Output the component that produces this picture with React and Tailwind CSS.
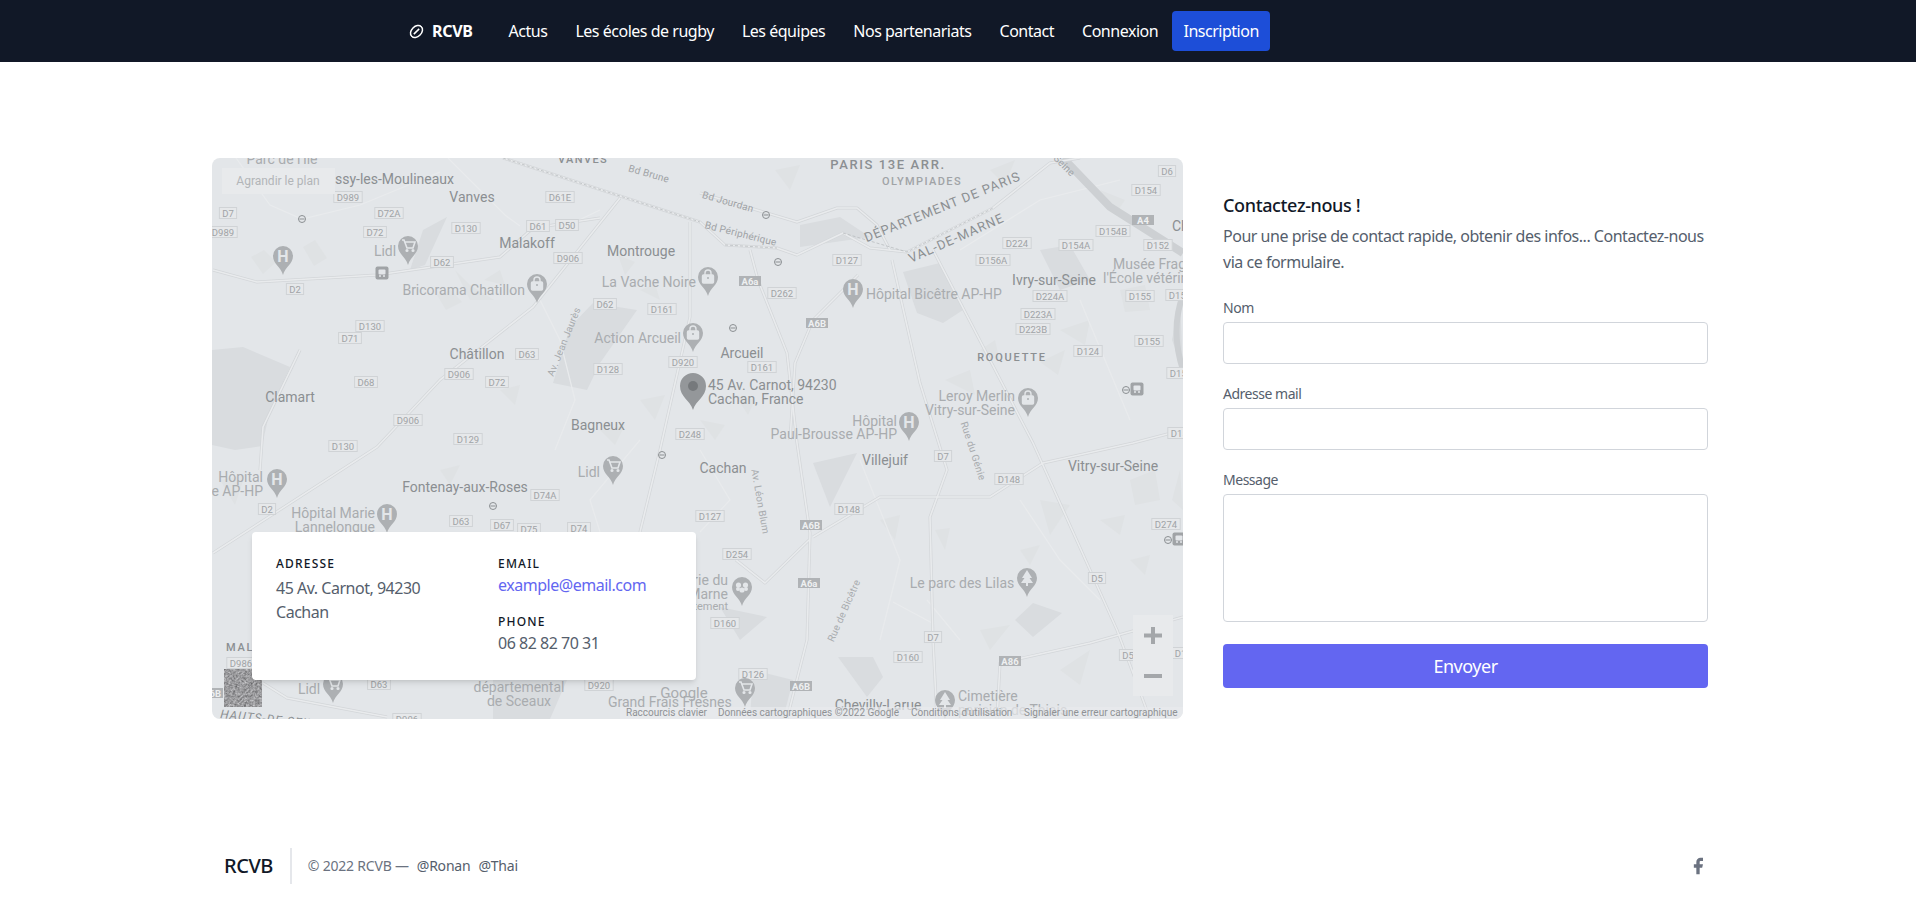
const badges = [
  [348,197,'D989'],[389,213,'D72A'],[228,213,'D7'],[223,232,'D989'],[375,232,'D72'],[466,228,'D130'],[560,197,'D61E'],[538,226,'D61'],[567,225,'D50'],[568,258,'D906'],[442,262,'D62'],[295,289,'D2'],[605,304,'D62'],[662,309,'D161'],[370,326,'D130'],[350,338,'D71'],[527,354,'D63'],[608,369,'D128'],[683,362,'D920'],[366,382,'D68'],[459,374,'D906'],[497,382,'D72'],[408,420,'D906'],[468,439,'D129'],[343,446,'D130'],[690,434,'D248'],
  [1167,171,'D6'],[1146,190,'D154'],[1113,231,'D154B'],[1017,243,'D224'],[1076,245,'D154A'],[1158,245,'D152'],[847,260,'D127'],[993,260,'D156A'],[782,293,'D262'],[1050,296,'D224A'],[1140,296,'D155'],[1180,295,'D155'],[1038,314,'D223A'],[1033,329,'D223B'],[1149,341,'D155'],[1088,351,'D124'],[762,367,'D161'],[1181,373,'D155'],[1182,433,'D155'],
  [267,509,'D2'],[545,495,'D74A'],[461,521,'D63'],[502,525,'D67'],[529,529,'D75'],[579,528,'D74'],[241,663,'D986'],[379,684,'D63'],[599,685,'D920'],[407,719,'D906'],
  [943,456,'D7'],[1009,479,'D148'],[849,509,'D148'],[710,516,'D127'],[737,554,'D254'],[1166,524,'D274'],[1097,578,'D5'],[725,623,'D160'],[933,637,'D7'],[908,657,'D160'],[753,674,'D126'],[1128,655,'D5'],[1186,653,'D152'],
]

const motorways = [[1143,220,'A4'],[750,281,'A6a'],[817,323,'A6B'],[811,525,'A6B'],[809,583,'A6a'],[1010,661,'A86'],[801,686,'A6B'],[212,693,'A6B']]

// x, y, text, anchor, color, size
const town = '#8b8f92'
const poi = '#a9acaf'
const labels = [
  [335,184,'ssy-les-Moulineaux','start',town],[472,202,'Vanves','middle',town],[282,164,"Parc de l'Île",'middle',poi],
  [527,248,'Malakoff','middle',town],[641,256,'Montrouge','middle',town],[385,256,'Lidl','middle',poi],[525,295,'Bricorama Chatillon','end',poi],
  [696,287,'La Vache Noire','end',poi],[681,343,'Action Arcueil','end',poi],[477,359,'Châtillon','middle',town],[290,402,'Clamart','middle',town],[598,430,'Bagneux','middle',town],
  [1113,269,'Musée Fragonard','start',poi],[1103,283,"l'École vétérinaire",'start',poi],[1054,285,'Ivry-sur-Seine','middle',town],[866,299,'Hôpital Bicêtre AP-HP','start',poi],
  [742,358,'Arcueil','middle',town],[708,390,'45 Av. Carnot, 94230','start',town],[708,404,'Cachan, France','start',town],
  [1015,401,'Leroy Merlin','end',poi],[1015,415,'Vitry-sur-Seine','end',poi],[897,426,'Hôpital','end',poi],[897,439,'Paul-Brousse AP-HP','end',poi],[1172,231,'Cha','start',town],
  [263,482,'Hôpital','end',poi],[263,496,'e AP-HP','end',poi],[375,518,'Hôpital Marie','end',poi],[375,532,'Lannelongue','end',poi],[465,492,'Fontenay-aux-Roses','middle',town],[600,477,'Lidl','end',poi],
  [309,694,'Lidl','middle',poi],[519,692,'départemental','middle',poi],[519,706,'de Sceaux','middle',poi],[608,707,'Grand Frais Fresnes','start',poi],
  [723,473,'Cachan','middle',town],[885,465,'Villejuif','middle',town],[1113,471,'Vitry-sur-Seine','middle',town],[728,585,'Prairie du','end',poi],[728,599,'Marne','end',poi],[728,610,'Département','end',poi,11],
  [962,588,'Le parc des Lilas','middle',poi],[878,710,'Chevilly-Larue','middle',town],[958,701,'Cimetière','start',poi],[958,715,'parisien de Thiais','start',poi],
]

// x, y, text, angle, size, color
const streets = [
  [648,177,'Bd Brune',16,10,'#a0a3a6'],[727,205,'Bd Jourdan',16,10,'#a0a3a6'],[740,237,'Bd Périphérique',14,10,'#a0a3a6'],[1062,168,'Seine',45,10,'#a0a3a6'],
  [567,343,'Av. Jean Jaurès',-68,10,'#a9acaf'],[757,502,'Av. Léon Blum',80,10,'#a9acaf'],[970,452,'Rue du Génie',72,10,'#a9acaf'],[847,612,'Rue de Bicêtre',-66,10,'#a9acaf'],
  [944,211,'DÉPARTEMENT DE PARIS',-22,13,town],[958,242,'VAL-DE-MARNE',-24,13,town],
]

const roads = [
  'M503 158L700 222L725 245L777 248L797 255L843 233L870 248L907 252L993 208L1050 163L1080 158',
  'M700 193L797 222L837 208L857 208L877 225L890 250',
  'M750 250L758 280L787 353L797 443L810 533L807 640L787 719',
  'M858 275L813 320L795 363L790 440',
  'M620 198L533 307L440 380L377 447L213 553',
  'M933 250L1033 443L1117 630L1133 673L1150 719',
  'M892 260L920 383L947 470L930 517L933 640L937 719',
  'M813 537L880 497L990 497L1043 463L1133 443L1183 430',
  'M997 719L1000 663L1090 643L1183 617',
  'M213 270L257 282L377 275L500 257L533 228L600 218',
  'M300 350L263 427L260 470',
  'M690 222L690 317L660 450L640 532',
  'M263 683L287 698L387 717',
  'M736 560L765 583L809 540',
]

// faint single lines, streets too small to have a casing
const minor = [
  'M236 158L270 205L302 219L360 205L440 172',
  'M448 158L505 215L520 226M575 222L600 210',
  'M540 300L560 340L575 400L555 450',
  'M640 440L590 500L600 532',
  'M700 450L730 500L700 532',
  'M860 460L900 560L880 640',
  'M1020 500L1060 560L1100 600',
  'M960 250L1040 200L1120 180',
  'M1080 300L1130 420',
  'M927 600L960 640M893 602L934 624',
]

const areas = [
  '212,350 243,347 290,367 270,410 262,446 235,450 212,445',
  '593,303 637,310 600,363 587,390 553,383 570,327',
  '903,272 940,263 963,310 943,323 917,313',
  '800,225 840,217 870,237 800,247',
  '1015,620 1033,603 1062,613 1033,637',
  '838,657 873,657 883,677 867,697',
  '813,463 857,453 830,507',
  '493,680 567,680 550,719 493,719',
  '720,607 767,617 740,640',
  '753,670 793,680 783,719 750,719',
  '423,230 447,217 425,265 410,270',
  '1040,250 1070,245 1090,280 1060,290',
  '1180,300 1183,370 1172,340',
]

const blocks = [
  '251,257 264,250 276,262 263,274','303,247 315,240 327,258 314,266','455,270 470,285 494,300 470,300','484,280 500,270 505,285',
  '437,295 451,290 462,302 446,310','618,255 635,262 625,275','640,290 655,284 660,300','700,420 725,425 715,440','735,395 755,400 748,415',
  '980,350 995,340 1000,362','1040,362 1065,350 1058,375','945,380 970,370 975,395','1120,290 1145,285 1150,310 1125,312','1060,330 1090,320 1085,345',
  '1130,480 1155,470 1160,500 1135,505','1180,470 1183,510 1172,500','1040,500 1070,505 1050,535','1100,520 1125,515 1120,535','1020,550 1040,545 1030,565',
  '880,520 900,515 895,540','935,530 950,528 945,550','1130,560 1150,555 1145,575','980,630 1010,625 990,650','1060,670 1090,650 1080,685',
  '500,390 520,385 515,405','640,400 665,395 655,420','440,470 460,465 450,485','600,430 625,425 615,445','220,480 245,475 235,505',
  '1100,190 1125,200 1115,215','990,170 1015,160 1005,185','775,170 800,165 790,190',
]

const metros = [[302,219],[662,455],[493,506],[766,215],[778,262],[733,328],[1126,390],[1168,540]]
const trams = [[382,273],[1137,389],[1179,539]]

function Pin({ x, y, kind }) {
  return (
    <g transform={`translate(${x} ${y})`}>
      <path d="M0 0C-2 -8 -10 -11 -10 -19A10 10 0 1 1 10 -19C10 -11 2 -8 0 0Z" fill="#adb0b3" />
      {kind === 'H' && <text y="-13.5" textAnchor="middle" fontSize="16" fontWeight="700" fill="#e3e6e9">H</text>}
      {kind === 'cart' && (
        <g fill="none" stroke="#e3e6e9" strokeWidth="1.6">
          <path d="M-6 -25H-4L-1 -17H5L7 -23H-3" />
          <circle cx="-1" cy="-14.5" r="0.8" />
          <circle cx="5" cy="-14.5" r="0.8" />
        </g>
      )}
      {kind === 'bag' && (
        <g fill="none" stroke="#e3e6e9" strokeWidth="1.4">
          <rect x="-5.5" y="-21" width="11" height="8" rx="1" fill="#e3e6e9" />
          <path d="M-3 -21V-23A3 3 0 0 1 3 -23V-21" />
          <circle cy="-18" r="1" fill="#adb0b3" stroke="none" />
        </g>
      )}
      {kind === 'flower' && (
        <g fill="#e3e6e9">
          <circle cx="-3.5" cy="-21" r="2.6" /><circle cx="3.5" cy="-21" r="2.6" /><circle cx="0" cy="-16" r="2.6" /><circle cx="-4" cy="-17" r="2" /><circle cx="4" cy="-17" r="2" />
        </g>
      )}
      {kind === 'tree' && <path d="M0 -27L5 -19H2.5L6 -14H1V-11H-1V-14H-6L-2.5 -19H-5Z" fill="#e3e6e9" />}
    </g>
  )
}

function MapDrawing() {
  return (
    <svg viewBox="212 158 971 561" className="block w-full h-full bg-[#e3e6e9] [font-family:Roboto,sans-serif] tracking-normal">
      <defs>
        <filter id="sat" x="0" y="0" width="100%" height="100%" colorInterpolationFilters="sRGB">
          <feTurbulence type="fractalNoise" baseFrequency="0.45" numOctaves="3" />
          <feColorMatrix values="0.55 0 0 0 0.33 0.55 0 0 0 0.33 0.55 0 0 0 0.34 0 0 0 0 1" />
        </filter>
      </defs>
      {areas.map((p) => <polygon key={p} points={p} fill="#d9dcdf" />)}
      {blocks.map((p) => <polygon key={p} points={p} fill="#dfe2e4" />)}
      {minor.map((d) => <path key={d} d={d} fill="none" stroke="#e9ebed" strokeWidth="1.2" />)}
      <path d="M1063 158L1110 207L1183 253" fill="none" stroke="#cdd0d3" strokeWidth="8" />
      <path d="M1183 295Q1170 330 1183 370" fill="none" stroke="#cdd0d3" strokeWidth="6" />
      {roads.map((d) => <path key={d} d={d} fill="none" stroke="#d3d6d9" strokeWidth="3" strokeLinejoin="round" />)}
      {roads.map((d) => <path key={d + 'c'} d={d} fill="none" stroke="#e9ebed" strokeWidth="1.6" strokeLinejoin="round" />)}
      <path d="M503 158L700 222M725 245L777 248M843 233L907 252L993 208" fill="none" stroke="#b9bcbf" strokeWidth="0.8" strokeDasharray="3 2" />

      {badges.map(([x, y, t], i) => {
        const w = t.length * 5.6 + 6
        return (
          <g key={i}>
            <rect x={x - w / 2} y={y - 5.5} width={w} height="11" fill="#e6e8ea" stroke="#d0d3d6" />
            <text x={x} y={y + 3.5} textAnchor="middle" fontSize="9.5" fill="#a0a3a6">{t}</text>
          </g>
        )
      })}
      {motorways.map(([x, y, t], i) => (
        <g key={i}>
          <rect x={x - 11} y={y - 5} width="22" height="10" fill="#b0b3b6" />
          <text x={x} y={y + 3.5} textAnchor="middle" fontSize="9.5" fontWeight="700" fill="#eef0f1">{t}</text>
        </g>
      ))}
      {metros.map(([x, y], i) => (
        <g key={i} fill="none" stroke="#8b8f92">
          <circle cx={x} cy={y} r="3.5" />
          <path d={`M${x - 2.5} ${y}H${x + 2.5}`} />
        </g>
      ))}
      {trams.map(([x, y], i) => (
        <g key={i}>
          <rect x={x - 6.5} y={y - 6.5} width="13" height="13" rx="2" fill="#a0a3a6" />
          <rect x={x - 3.5} y={y - 3.5} width="7" height="5" rx="1" fill="#e3e6e9" />
          <circle cx={x - 2} cy={y + 3} r="1" fill="#e3e6e9" />
          <circle cx={x + 2} cy={y + 3} r="1" fill="#e3e6e9" />
        </g>
      ))}

      {labels.map(([x, y, t, a, c, s], i) => (
        <text key={i} x={x} y={y} textAnchor={a} fontSize={s || 14} fill={c}>{t}</text>
      ))}
      {streets.map(([x, y, t, r, s, c], i) => (
        <text key={i} transform={`translate(${x} ${y}) rotate(${r})`} textAnchor="middle" fontSize={s} fill={c} letterSpacing={s > 10 ? 1 : 0.2}>{t}</text>
      ))}
      <text x="888" y="169" textAnchor="middle" fontSize="13" fontWeight="500" letterSpacing="1.6" fill={town}>PARIS 13E ARR.</text>
      <text x="922" y="185" textAnchor="middle" fontSize="11" fontWeight="500" letterSpacing="1.4" fill="#a0a3a6">OLYMPIADES</text>
      <text x="1012" y="361" textAnchor="middle" fontSize="11" fontWeight="500" letterSpacing="1.8" fill={town}>ROQUETTE</text>
      <text x="583" y="163" textAnchor="middle" fontSize="11" fontWeight="500" letterSpacing="1.4" fill={town}>VANVES</text>
      <text x="226" y="651" fontSize="11" fontWeight="500" letterSpacing="1.8" fill={town}>MAL</text>
      <text transform="translate(220 718) rotate(6)" fontSize="12" fontStyle="italic" letterSpacing="1" fill={town}>HAUTS-DE-SEINE</text>
      <text x="684" y="698" textAnchor="middle" fontSize="15" fill={poi}>Google</text>

      <Pin x={283} y={275} kind="H" />
      <Pin x={408} y={265} kind="cart" />
      <Pin x={537} y={303} kind="bag" />
      <Pin x={693} y={352} kind="bag" />
      <Pin x={708} y={296} kind="bag" />
      <Pin x={853} y={308} kind="H" />
      <Pin x={909} y={441} kind="H" />
      <Pin x={1028} y={417} kind="bag" />
      <Pin x={277} y={498} kind="H" />
      <Pin x={387} y={533} kind="H" />
      <Pin x={613} y={485} kind="cart" />
      <Pin x={333} y={703} kind="cart" />
      <Pin x={745} y={707} kind="cart" />
      <Pin x={742} y={606} kind="flower" />
      <Pin x={1027} y={597} kind="tree" />
      <Pin x={945} y={719} kind="tree" />

      {/* address marker */}
      <path d="M693 410C690 400 680 397 680 386A13 13 0 1 1 706 386C706 397 696 400 693 410Z" fill="#94979a" />
      <circle cx="693" cy="386" r="5" fill="#76797c" />

      {/* map chrome */}
      <rect x="222" y="168" width="113" height="26" fill="#e8eaec" />
      <text x="278" y="185" textAnchor="middle" fontSize="12" fill="#b2b5b8">Agrandir le plan</text>
      <rect x="224" y="669" width="38" height="38" filter="url(#sat)" />
      <rect x="1133" y="615" width="40" height="81" fill="#e8eaec" />
      <path d="M1153 627V644M1144 635.5H1162M1144 676H1162" stroke="#a4a7aa" strokeWidth="4" />
      <rect x="620" y="707" width="563" height="12" fill="#e8eaec" opacity="0.7" />
      <g fontSize="10" fill="#8f9295">
        <text x="626" y="716">Raccourcis clavier</text>
        <text x="718" y="716">Données cartographiques ©2022 Google</text>
        <text x="911" y="716">Conditions d'utilisation</text>
        <text x="1024" y="716">Signaler une erreur cartographique</text>
      </g>
    </svg>
  )
}

function Field({ label, children }) {
  return (
    <div className="mb-4">
      <label className="block text-sm leading-7 text-[#555e6c]">{label}</label>
      {children}
    </div>
  )
}

const navLinks = ['Actus', 'Les écoles de rugby', 'Les équipes', 'Nos partenariats', 'Contact', 'Connexion']

export default function App() {
  return (
    <div className="min-h-[924px] bg-white [font-family:'Noto_Sans',sans-serif] tracking-[-0.03em] text-[#555e6c]">
      <header className="h-[62px] bg-[#111827] text-white flex items-center pl-[409px]">
        <svg viewBox="0 0 24 24" className="w-[15px] h-[15px] mr-2 -rotate-45" fill="none" stroke="currentColor" strokeWidth="2.4">
          <ellipse cx="12" cy="12" rx="11" ry="8" />
          <path d="M6 12H18" />
        </svg>
        <span className="font-bold text-base mr-[22px] tracking-[-0.02em]">RCVB</span>
        {navLinks.map((l) => (
          <a key={l} className="mx-[14px] text-base">{l}</a>
        ))}
        <button className="h-10 w-[98px] rounded bg-[#1d4ed8] text-base text-white">Inscription</button>
      </header>

      <main className="ml-[212px] w-[1496px] pt-24 flex gap-10">
        <div className="relative w-[971px] h-[561px] rounded-lg overflow-hidden">
          <MapDrawing />
          <div className="absolute left-10 bottom-[39px] w-[444px] flex bg-white rounded shadow-md py-6">
            <div className="w-1/2 px-6">
              <h2 className="text-xs font-medium tracking-widest text-[#111827]">ADRESSE</h2>
              <p className="mt-1 leading-6">45 Av. Carnot, 94230 Cachan</p>
            </div>
            <div className="w-1/2 px-6">
              <h2 className="text-xs font-medium tracking-widest text-[#111827]">EMAIL</h2>
              <a className="block leading-relaxed text-[#6366f1]">example@email.com</a>
              <h2 className="mt-4 text-xs font-medium tracking-widest text-[#111827]">PHONE</h2>
              <p className="leading-relaxed">06 82 82 70 31</p>
            </div>
          </div>
        </div>

        <div className="w-[485px] pt-[33px]">
          <h2 className="mb-1 text-lg font-medium leading-7 text-[#111827] tracking-[-0.02em]">Contactez-nous !</h2>
          <p className="mb-[19px] leading-relaxed">Pour une prise de contact rapide, obtenir des infos... Contactez-nous via ce formulaire.</p>
          <Field label="Nom"><input className="block w-full h-[42px] rounded border border-[#d1d5db] bg-white" /></Field>
          <Field label="Adresse mail"><input className="block w-full h-[42px] rounded border border-[#d1d5db] bg-white" /></Field>
          <Field label="Message"><textarea className="block w-full h-32 rounded border border-[#d1d5db] bg-white resize-none" /></Field>
          <button className="mt-[6px] w-full h-11 rounded bg-[#6366f1] text-lg text-white">Envoyer</button>
        </div>
      </main>

      <footer className="ml-[212px] w-[1496px] mt-[129px] h-9 flex items-center">
        <span className="ml-3 text-xl font-medium text-[#111827]">RCVB</span>
        <p className="ml-[17px] h-9 border-l-2 border-[#e5e7eb] pl-4 flex items-center text-sm text-[#6b7280] tracking-[-0.015em]">
          © 2022 RCVB —
          <a className="ml-2 text-[#555e6c]">@Ronan</a>
          <a className="ml-2 text-[#555e6c]">@Thai</a>
        </p>
        <svg viewBox="0 0 24 24" fill="currentColor" className="ml-auto w-5 h-5 text-[#6b7280]">
          <path d="M18 2h-3a5 5 0 00-5 5v3H7v4h3v8h4v-8h3l1-4h-4V7a1 1 0 011-1h3z" />
        </svg>
      </footer>
    </div>
  )
}
